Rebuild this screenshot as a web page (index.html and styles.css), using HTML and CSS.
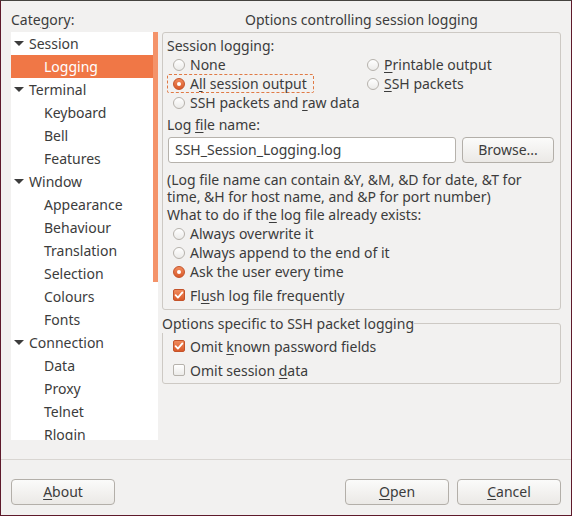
FILE: index.html
```html
<!DOCTYPE html>
<html>
<head>
<meta charset="utf-8">
<link rel="stylesheet" href="styles.css">
</head>
<body>
<div class="window">
  <div class="main">
    <div class="left">
      <div class="hdr">Cate<u>g</u>ory:</div>
      <div class="tree">
        <div class="row top"><span class="arrow"></span>Session</div>
        <div class="row child sel">Logging</div>
        <div class="row top"><span class="arrow"></span>Terminal</div>
        <div class="row child">Keyboard</div>
        <div class="row child">Bell</div>
        <div class="row child">Features</div>
        <div class="row top"><span class="arrow"></span>Window</div>
        <div class="row child">Appearance</div>
        <div class="row child">Behaviour</div>
        <div class="row child">Translation</div>
        <div class="row child">Selection</div>
        <div class="row child">Colours</div>
        <div class="row child">Fonts</div>
        <div class="row top"><span class="arrow"></span>Connection</div>
        <div class="row child">Data</div>
        <div class="row child">Proxy</div>
        <div class="row child">Telnet</div>
        <div class="row child">Rlogin</div>
        <div class="thumb"></div>
      </div>
    </div>
    <div class="right">
      <div class="title">Options controlling session logging</div>
      <div class="frame f1">
        <div class="label">Session logging:</div>
        <div class="radiogrid">
          <div class="opt"><span class="radio"></span>None</div>
          <div class="opt col2"><span class="radio"></span><span><u>P</u>rintable output</span></div>
          <div class="opt focus"><span class="radio on"></span><span>A<u>l</u>l session output</span></div>
          <div class="opt col2"><span class="radio"></span><span><u>S</u>SH packets</span></div>
          <div class="opt"><span class="radio"></span><span>SSH packets and <u>r</u>aw data</span></div>
        </div>
        <div class="label lf">Log <u>f</u>ile name:</div>
        <div class="entryrow">
          <div class="entry">SSH_Session_Logging.log</div>
          <button class="btn browse">Browse...</button>
        </div>
        <div class="help"><div class="hl">(Log file name can contain &amp;Y, &amp;M, &amp;D for date, &amp;T for</div><div class="hl">time, &amp;H for host name, and &amp;P for port number)</div></div>
        <div class="label">What to do if th<u>e</u> log file already exists:</div>
        <div class="opt"><span class="radio"></span>Always overwrite it</div>
        <div class="opt"><span class="radio"></span>Always append to the end of it</div>
        <div class="opt"><span class="radio on"></span>Ask the user every time</div>
        <div class="opt chk flush"><span class="check on"><svg viewBox="0 0 12 12" width="12" height="12"><path d="M2.6 6.2 L4.9 8.6 L9.4 3.4" fill="none" stroke="#fff" stroke-width="1.8" stroke-linecap="round" stroke-linejoin="round"/></svg></span><span>Fl<u>u</u>sh log file frequently</span></div>
      </div>
      <fieldset class="f2">
        <legend>Options specific to SSH packet logging</legend>
        <div class="opt chk r1"><span class="check on"><svg viewBox="0 0 12 12" width="12" height="12"><path d="M2.6 6.2 L4.9 8.6 L9.4 3.4" fill="none" stroke="#fff" stroke-width="1.8" stroke-linecap="round" stroke-linejoin="round"/></svg></span><span>Omit <u>k</u>nown password fields</span></div>
        <div class="opt chk r2"><span class="check"></span><span>Omit session <u>d</u>ata</span></div>
      </fieldset>
    </div>
  </div>
  <div class="sep"></div>
  <div class="buttons">
    <button class="btn wide"><u>A</u>bout</button>
    <span class="spacer"></span>
    <button class="btn wide"><u>O</u>pen</button>
    <button class="btn wide"><u>C</u>ancel</button>
  </div>
</div>
</body>
</html>
```
FILE: styles.css
```css
html, body {
  margin: 0;
  padding: 0;
  background: #f2f1f0;
}
.window {
  width: 572px;
  height: 516px;
  box-sizing: border-box;
  border-top: 1px solid #45433f;
  border-left: 1px solid #5e1a2b;
  border-right: 1px solid #5e1a2b;
  border-bottom: 1px solid #5e1a2b;
  padding: 0 10px 10px 10px;
  background: #f2f1f0;
  font-family: "Noto Sans", "DejaVu Sans", sans-serif;
  font-size: 14px;
  color: #3c3c3c;
  display: flex;
  flex-direction: column;
}
u {
  text-decoration: underline;
  text-underline-offset: 2px;
}
.main {
  display: flex;
  gap: 4px;
  height: 439px;
}
.left {
  width: 147px;
  display: flex;
  flex-direction: column;
}
.hdr {
  height: 31px;
  box-sizing: border-box;
  padding-top: 9px;
  line-height: 19px;
}
.tree {
  position: relative;
  height: 408px;
  background: #ffffff;
  overflow: hidden;
}
.row {
  height: 23px;
  line-height: 23px;
  display: flex;
  align-items: center;
  white-space: nowrap;
  margin-right: 5px;
}
.row.top {
  padding-left: 3px;
}
.row.child {
  padding-left: 33px;
}
.row.sel {
  background: #f07746;
  color: #ffffff;
}
.arrow {
  width: 0;
  height: 0;
  border-left: 5px solid transparent;
  border-right: 5px solid transparent;
  border-top: 5px solid #3c3c3c;
  margin-right: 5px;
}
.thumb {
  position: absolute;
  right: 0;
  top: 0;
  width: 5px;
  height: 250px;
  background: #f4936a;
}
.right {
  width: 399px;
  display: flex;
  flex-direction: column;
}
.title {
  height: 31px;
  box-sizing: border-box;
  padding-top: 9px;
  line-height: 19px;
  text-align: center;
}
.frame {
  border: 1px solid #cdc9c4;
  border-radius: 3px;
  box-sizing: border-box;
}
.f1 {
  height: 278px;
  padding: 3px 4px 0 4px;
}
.label {
  height: 19px;
  line-height: 19px;
  white-space: nowrap;
}
.lf {
  margin-top: 3px;
}
.radiogrid {
  display: grid;
  grid-template-columns: 194px auto;
  grid-template-rows: 19px 19px 19px;
  grid-auto-flow: row;
}
.radiogrid .opt {
  justify-self: start;
}
.opt {
  display: flex;
  align-items: center;
  height: 19px;
  box-sizing: border-box;
  border: 1px dashed transparent;
  padding: 0 3px 0 5px;
  white-space: nowrap;
  width: max-content;
}
.opt.focus {
  border-color: #e07a45;
  border-radius: 2px;
  padding-right: 6px;
}
.radio {
  width: 12px;
  height: 12px;
  box-sizing: border-box;
  border-radius: 50%;
  border: 1px solid #b6b2ac;
  background: linear-gradient(#ffffff, #ecebe9);
  margin-right: 5px;
  flex: none;
  position: relative;
}
.radio.on {
  border-color: #c4532a;
  background: linear-gradient(#f08a5c, #d95a2a);
}
.radio.on::after {
  content: "";
  position: absolute;
  left: 3px;
  top: 3px;
  width: 4px;
  height: 4px;
  border-radius: 50%;
  background: #ffffff;
}
.check {
  width: 12px;
  height: 12px;
  box-sizing: border-box;
  border-radius: 2px;
  border: 1px solid #b6b2ac;
  background: linear-gradient(#ffffff, #ecebe9);
  margin-right: 5px;
  flex: none;
  display: flex;
  align-items: center;
  justify-content: center;
}
.check.on {
  border-color: #c4532a;
  background: linear-gradient(#f08a5c, #d95a2a);
}
.check svg {
  display: block;
  flex: none;
}
.flush {
  margin-top: 4px;
}
.entryrow {
  display: flex;
  margin-top: 3px;
  gap: 6px;
  height: 26px;
  padding-left: 1px;
}
.entry {
  width: 288px;
  box-sizing: border-box;
  border: 1px solid #b6b2ac;
  border-radius: 3px;
  background: #ffffff;
  padding-left: 6px;
  line-height: 24px;
  white-space: nowrap;
}
.btn {
  font-family: inherit;
  font-size: 14px;
  color: #3c3c3c;
  border: 1px solid #b3afa9;
  border-radius: 4px;
  background: linear-gradient(#fbfbfa, #ebe9e6);
  box-sizing: border-box;
  padding: 0;
  height: 26px;
  line-height: 24px;
  text-align: center;
}
.browse {
  width: 92px;
}
.help {
  margin-top: 8px;
  white-space: nowrap;
}
.hl {
  height: 17px;
  line-height: 17px;
}
.f2 {
  margin: 4px 0 0 0;
  padding: 0 4px 3px 4px;
  border: 1px solid #cdc9c4;
  border-radius: 3px;
  min-width: 0;
}
.f2 legend {
  padding: 0;
  margin-left: -5px;
  line-height: 19px;
  height: 19px;
}
.chk {
  height: 20px;
}
.r1 {
  margin-top: 3px;
}
.r2 {
  margin-top: 4px;
}
.sep {
  margin-top: 19px;
  height: 0;
  border-top: 1px solid #d9d6d2;
  margin-left: -10px;
  margin-right: -10px;
}
.buttons {
  margin-top: 19px;
  display: flex;
  gap: 8px;
  height: 26px;
}
.spacer {
  flex: 1;
}
.btn.wide {
  width: 104px;
}
```
